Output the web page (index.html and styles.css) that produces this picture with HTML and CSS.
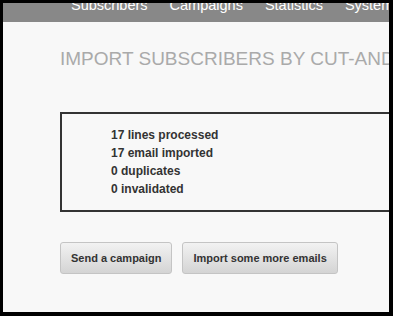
FILE: index.html
```html
<!DOCTYPE html>
<html lang="en">
<head>
    <meta charset="UTF-8">
    <meta name="viewport" content="width=device-width, initial-scale=1.0">
    <title>Import subscribers</title>
    <link rel="stylesheet" href="styles.css">
</head>
<body>

    <div class="frame">
        <div class="topnav">
            <a href="#">Subscribers</a>
            <a href="#">Campaigns</a>
            <a href="#">Statistics</a>
            <a href="#">System</a>
        </div>

        <div class="content">
            <h1>Import subscribers by cut-and-paste</h1>

            <div class="report">
                <p>17 lines processed</p>
                <p>17 email imported</p>
                <p>0 duplicates</p>
                <p>0 invalidated</p>
            </div>

            <div class="actions">
                <button>Send a campaign</button>
                <button>Import some more emails</button>
            </div>
        </div>
    </div>

</body>
</html>
```

FILE: styles.css
```css
html, body {
    margin: 0;
    background-color: #000;
}
body {
    padding: 3px 4px 4px 3px;
    height: 316px;
    box-sizing: border-box;
    font-family: "Liberation Sans", Arial, sans-serif;
}
.frame {
    background-color: #f8f8f8;
    height: 100%;
    overflow: hidden;
}
.topnav {
    background-color: #888;
    height: 19px;
    display: flex;
    gap: 22px;
    padding-left: 68px;
    white-space: nowrap;
    overflow: hidden;
}
.topnav a {
    color: #fff;
    text-decoration: none;
    font-size: 14.5px;
    line-height: 15px;
    margin-top: -5px;
}
.content {
    padding: 27px 0 0 57px;
}
h1 {
    margin: 0;
    font-size: 19px;
    font-weight: normal;
    color: #aaa;
    text-transform: uppercase;
    white-space: nowrap;
    line-height: 20px;
}
.report {
    margin-top: 43px;
    border: 2px solid #333;
    border-right: none;
    padding: 12px 0 12px 49px;
}
.report p {
    margin: 0;
    font-size: 12px;
    font-weight: bold;
    color: #333;
    line-height: 18px;
}
.actions {
    margin-top: 30px;
    display: flex;
    gap: 10px;
}
.actions button {
    height: 32px;
    padding: 0 10px;
    font-family: "Liberation Sans", Arial, sans-serif;
    font-size: 11px;
    font-weight: bold;
    color: #333;
    background: linear-gradient(#f2f2f2, #d4d4d4);
    border: 1px solid #c4c4c4;
    border-radius: 3px;
    cursor: pointer;
}
```
